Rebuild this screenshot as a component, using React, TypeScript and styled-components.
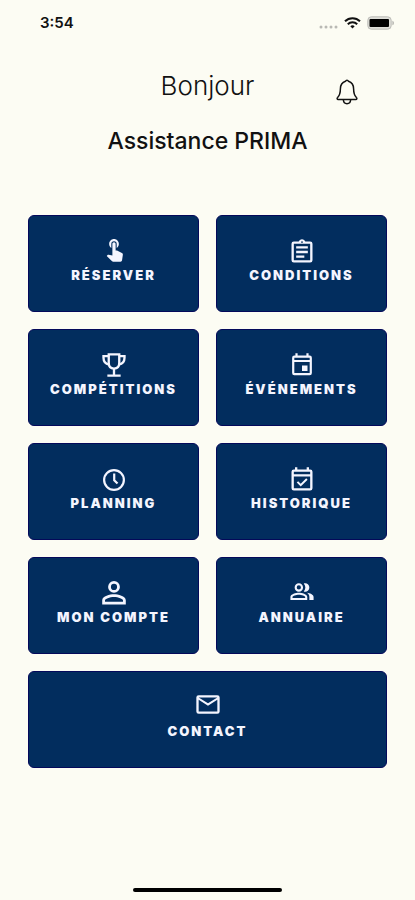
import React from "react";
import styled, { createGlobalStyle } from "styled-components";

const GlobalStyle = createGlobalStyle`
  *, *::before, *::after { box-sizing: border-box; }
  html, body, #root { margin: 0; height: 100%; }
  body {
    background: #fcfcf3;
    color: #111;
    font-family: Inter, "Liberation Sans", sans-serif;
  }
`;

const Screen = styled.div`
  display: flex;
  flex-direction: column;
  min-height: 100%;
  background: #fcfcf3;
`;

const StatusBar = styled.div`
  display: flex;
  align-items: center;
  justify-content: space-between;
  height: 46px;
  padding: 0 20px 0 40px;
`;

const Time = styled.span`
  font-size: 15px;
  line-height: 20px;
  font-weight: 600;
`;

const StatusIcons = styled.div`
  display: flex;
  align-items: center;
  gap: 6px;
`;

const Header = styled.header`
  display: grid;
  grid-template-columns: 1fr auto 1fr;
  align-items: center;
  padding: 20px 28px 0;
`;

const Greeting = styled.h1`
  grid-column: 2;
  margin: 0;
  font-size: 26px;
  line-height: 32px;
  font-weight: 300;
`;

const BellButton = styled.button`
  display: flex;
  justify-self: end;
  margin: 12px 28px 0 0;
  padding: 0;
  border: 0;
  background: none;
  color: #111;
  cursor: pointer;
`;

const UserName = styled.h2`
  margin: 21px 0 0;
  text-align: center;
  font-size: 23px;
  line-height: 28px;
  font-weight: 500;
`;

const Menu = styled.nav`
  display: grid;
  grid-template-columns: 1fr 1fr;
  gap: 17px;
  padding: 60px 28px 0;
`;

const Tile = styled.button<{ $wide?: boolean }>`
  grid-column: ${(p) => (p.$wide ? "1 / -1" : "auto")};
  display: flex;
  flex-direction: column;
  align-items: center;
  height: 97px;
  padding: 22px 0 0;
  border: 1px solid #04095a;
  border-radius: 6px;
  background: #022d5e;
  color: #f4f5ff;
  cursor: pointer;
`;

const TileIcon = styled.svg`
  display: block;
  width: 28px;
  height: 28px;
  fill: currentColor;
`;

const TileLabel = styled.span`
  font-family: Inter, "Liberation Sans", sans-serif;
  font-size: 13px;
  line-height: 18px;
  font-weight: 900;
  letter-spacing: 2px;
`;

const HomeArea = styled.footer`
  display: flex;
  justify-content: center;
  margin-top: auto;
  padding: 24px 0 8px;
`;

const HomeBar = styled.div`
  width: 36%;
  height: 4px;
  border-radius: 2px;
  background: #000;
`;

type Item = { label: string; box: string; art: React.ReactNode; wide?: boolean };

const calendarFrame =
  "M19 3h-1V1h-2v2H8V1H6v2H5a2 2 0 0 0-2 2v14a2 2 0 0 0 2 2h14a2 2 0 0 0 2-2V5a2 2 0 0 0-2-2zm0 16H5V9h14v10zm0-12H5V5h14v2z";

const items: Item[] = [
  {
    label: "RÉSERVER",
    box: "-1.5 2 26 26",
    art: (
      <path d="M9 11.24V7.5a2.5 2.5 0 0 1 5 0v3.74c1.21-.81 2-2.18 2-3.74C16 5.01 13.99 3 11.5 3S7 5.01 7 7.5c0 1.56.79 2.93 2 3.74zm9.84 4.63l-4.54-2.26c-.17-.07-.35-.11-.54-.11H13v-6c0-.83-.67-1.5-1.5-1.5S10 6.67 10 7.5v10.74l-3.43-.72c-.08-.01-.15-.03-.24-.03-.31 0-.59.13-.79.33l-.79.8 4.94 4.94c.27.27.65.44 1.06.44h6.79c.75 0 1.33-.55 1.44-1.28l.75-5.27c.01-.07.02-.14.02-.2 0-.62-.38-1.16-.91-1.38z" />
    ),
  },
  {
    label: "CONDITIONS",
    box: "0 0 24 24",
    art: (
      <path d="M7 15h7v2H7zm0-4h10v2H7zm0-4h10v2H7zm12-4h-4.18C14.4 1.84 13.3 1 12 1s-2.4.84-2.82 2H5a2 2 0 0 0-2 2v14a2 2 0 0 0 2 2h14a2 2 0 0 0 2-2V5a2 2 0 0 0-2-2zm-7-.25a.75.75 0 1 1 0 1.5.75.75 0 0 1 0-1.5zM19 19H5V5h14v14z" />
    ),
  },
  {
    label: "COMPÉTITIONS",
    box: "0 1 24 24",
    art: (
      <g fill="none" stroke="currentColor" strokeWidth="2">
        <path d="M7.500 3h9v7.500c0 3-1.800 4.700-4.500 4.700s-4.500-1.700-4.500-4.700z" />
        <path d="M7 4.500H3V6c0 3.200 1.300 5.200 4.800 5.700M17 4.500h4V6c0 3.200-1.300 5.200-4.800 5.700" />
        <path d="M12 15v6M6.300 21.300h11.400" />
      </g>
    ),
  },
  {
    label: "ÉVÉNEMENTS",
    box: "-.75 -.2 25.500 25.500",
    art: <path d={`${calendarFrame}M12 12h5v5h-5z`} />,
  },
  {
    label: "PLANNING",
    box: "-.75 -.75 25.500 25.500",
    art: (
      <g fill="none" stroke="currentColor" strokeWidth="2">
        <circle cx="12" cy="12" r="9" />
        <path d="M12.200 6v6.200l3 3" />
      </g>
    ),
  },
  {
    label: "HISTORIQUE",
    box: "0 0 24 24",
    art: <path d={`${calendarFrame}M16.800 11.700l-1.200-1.200-4.700 4.700-2.200-2.200-1.200 1.200 3.400 3.400z`} />,
  },
  {
    label: "MON COMPTE",
    box: "2.500 3.300 19 19",
    art: (
      <path d="M12 5.900a2.100 2.100 0 1 1 0 4.200 2.100 2.100 0 0 1 0-4.200m0 9c2.970 0 6.100 1.460 6.100 2.100v1.100H5.900V17c0-.640 3.130-2.100 6.100-2.100M12 4a4 4 0 1 0 0 8 4 4 0 0 0 0-8zm0 9c-2.670 0-8 1.340-8 4v3h16v-3c0-2.660-5.330-4-8-4z" />
    ),
  },
  {
    label: "ANNUAIRE",
    box: "-1.300 .9 26.600 26.600",
    art: (
      <path d="M16.670 13.130C18.040 14.060 19 15.320 19 17v3h4v-3c0-2.180-3.570-3.470-6.330-3.870zM15 12c2.210 0 4-1.790 4-4s-1.790-4-4-4c-.470 0-.910.100-1.330.240a5.980 5.980 0 0 1 0 7.520c.420.140.860.240 1.330.240zM9 12c2.210 0 4-1.790 4-4s-1.790-4-4-4-4 1.790-4 4 1.790 4 4 4zm0-6a2 2 0 1 1 0 4 2 2 0 0 1 0-4zM9 13c-2.670 0-8 1.340-8 4v3h16v-3c0-2.660-5.330-4-8-4zm6 5H3v-.990C3.200 16.290 6.300 15 9 15s5.800 1.290 6 2v1z" />
    ),
  },
  {
    label: "CONTACT",
    box: "0 3 24 24",
    wide: true,
    art: (
      <path d="M22 6a2 2 0 0 0-2-2H4a2 2 0 0 0-2 2v12a2 2 0 0 0 2 2h16a2 2 0 0 0 2-2V6zm-2 0l-8 5-8-5h16zm0 12H4V8l8 5 8-5v10z" />
    ),
  },
];

const CellularDots = () => (
  <svg width="19" height="16" viewBox="0 0 19 16" fill="#b9b9b4" aria-hidden="true">
    <circle cx="2" cy="12" r="1.500" />
    <circle cx="7" cy="12" r="1.500" />
    <circle cx="12" cy="12" r="1.500" />
    <circle cx="17" cy="12" r="1.500" />
  </svg>
);

const Wifi = () => (
  <svg width="17" height="16" viewBox="0 0 17 16" fill="none" stroke="#111" strokeWidth="2" aria-hidden="true">
    <path d="M1 6.300a10.600 10.600 0 0 1 15 0" />
    <path d="M3.800 9.200a6.700 6.700 0 0 1 9.400 0" />
    <path d="M6.300 11.300a3.200 3.200 0 0 1 4.400 0L8.500 13.600z" fill="#111" stroke="none" />
  </svg>
);

const Battery = () => (
  <svg width="28" height="14" viewBox="0 0 28 14" aria-hidden="true">
    <rect x=".8" y=".8" width="23.400" height="12.400" rx="3.500" fill="#deded8" stroke="#bdbdb8" />
    <rect x="2.500" y="3" width="19.500" height="8" rx="1" fill="#000" />
    <path d="M25.500 4.700c1.700.6 1.700 4 0 4.600z" fill="#a5a5a0" />
  </svg>
);

const Bell = () => (
  <svg
    width="24"
    height="28"
    viewBox="0 0 24 28"
    fill="none"
    stroke="currentColor"
    strokeWidth="1.500"
    strokeLinejoin="round"
    aria-hidden="true"
  >
    <path d="M10.500 3.300c.6-1.500 2.400-1.500 3 0 3.400 1.200 5.100 3.900 5.100 7.500 0 4.800.7 6.700 2.800 8.700.9.800.5 2-.6 2H3.200c-1.100 0-1.500-1.200-.6-2 2.100-2 2.800-3.900 2.800-8.700 0-3.600 1.700-6.300 5.100-7.500z" />
    <path d="M8.300 21.500c.2 2.800 1.600 4.200 3.700 4.200s3.500-1.400 3.700-4.200" />
  </svg>
);

export default function App() {
  return (
    <>
      <GlobalStyle />
      <Screen>
        <StatusBar>
          <Time>3:54</Time>
          <StatusIcons>
            <CellularDots />
            <Wifi />
            <Battery />
          </StatusIcons>
        </StatusBar>
        <Header>
          <Greeting>Bonjour</Greeting>
          <BellButton type="button" aria-label="Notifications">
            <Bell />
          </BellButton>
        </Header>
        <UserName>Assistance PRIMA</UserName>
        <Menu>
          {items.map((item) => (
            <Tile key={item.label} type="button" $wide={item.wide}>
              <TileIcon viewBox={item.box} aria-hidden="true">
                {item.art}
              </TileIcon>
              <TileLabel>{item.label}</TileLabel>
            </Tile>
          ))}
        </Menu>
        <HomeArea>
          <HomeBar />
        </HomeArea>
      </Screen>
    </>
  );
}
